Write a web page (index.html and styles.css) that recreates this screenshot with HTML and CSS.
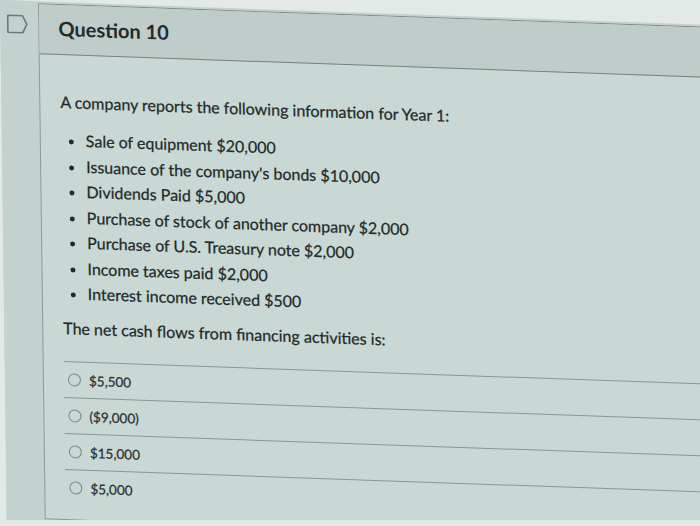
FILE: index.html
```html
<!DOCTYPE html>
<html lang="en">
<head>
<meta charset="utf-8">
<title>Question 10</title>
<link rel="stylesheet" href="styles.css">
</head>
<body>
<div class="page">
  <aside class="side">
    <svg class="flag" width="22" height="21" viewBox="0 0 22 21" aria-hidden="true">
      <path d="M1.5 2 H16.3 L20.5 10.5 L16.3 19 H1.5 Z" fill="none" stroke="#6d7977" stroke-width="1.6" stroke-linejoin="round"/>
    </svg>
  </aside>
  <section class="card">
    <header class="card-head">
      <h2 class="title">Question 10</h2>
    </header>
    <div class="card-body">
      <p class="lead">A company reports the following information for Year 1:</p>
      <ul class="facts">
        <li>Sale of equipment $20,000</li>
        <li>Issuance of the company's bonds $10,000</li>
        <li>Dividends Paid $5,000</li>
        <li>Purchase of stock of another company $2,000</li>
        <li>Purchase of U.S. Treasury note $2,000</li>
        <li>Income taxes paid $2,000</li>
        <li>Interest income received $500</li>
      </ul>
      <p class="prompt">The net cash flows from financing activities is:</p>
      <ul class="answers">
        <li class="answer"><span class="radio"></span><span>$5,500</span></li>
        <li class="answer"><span class="radio"></span><span>($9,000)</span></li>
        <li class="answer"><span class="radio"></span><span>$15,000</span></li>
        <li class="answer"><span class="radio"></span><span>$5,000</span></li>
      </ul>
    </div>
  </section>
</div>
</body>
</html>
```
FILE: styles.css
```css
html {
  background: #e2e9e6;
}
body {
  margin: 0;
  overflow: hidden;
  font-family: Lato, "Open Sans", sans-serif;
  color: #24292b;
}
.page {
  display: flex;
  width: 760px;
  height: 520px;
  background: #c4d2cf;
  transform: matrix(1, 0.035, 0.013, 1, 0, 0);
  transform-origin: 0 0;
}
.side {
  width: 38px;
  flex: none;
  padding: 13px 0 0 6px;
  box-sizing: border-box;
  background: #c4d2cf;
}
.flag {
  display: block;
}
.card {
  flex: 1;
  margin-top: 2px;
  margin-bottom: 2px;
  border-top: 1px solid #7f8b89;
  border-left: 1px solid #8d9997;
  border-bottom: 1px solid #8d9997;
  background: #c9d8d4;
}
.card-head {
  height: 49px;
  padding: 0 0 0 19px;
  background: #c0ccc9;
  border-bottom: 1px solid #76827f;
}
.title {
  margin: 0;
  padding-top: 11px;
  font-size: 20px;
  line-height: 24px;
  font-weight: 700;
}
.card-body {
  padding: 0 0 10px 20px;
  -webkit-text-stroke: 0.25px currentColor;
}
.lead {
  margin: 35px 0 0;
  font-size: 16px;
  line-height: 24px;
}
.facts {
  margin: 13px 0 0;
  padding-left: 25px;
  font-size: 16px;
  line-height: 25.5px;
}
.prompt {
  margin: 10px 0 0;
  font-size: 16px;
  line-height: 24px;
}
.answers {
  list-style: none;
  margin: 21px 0 0;
  padding: 0;
}
.answer {
  display: flex;
  align-items: center;
  gap: 8px;
  height: 36px;
  padding: 1px 0 0 4px;
  box-sizing: border-box;
  border-top: 1px solid #8a9794;
  font-size: 13.5px;
  color: #2c3133;
}
.radio {
  width: 11px;
  height: 11px;
  border: 1px solid #7b8684;
  border-radius: 50%;
  flex: none;
  -webkit-text-stroke: 0;
}
```
